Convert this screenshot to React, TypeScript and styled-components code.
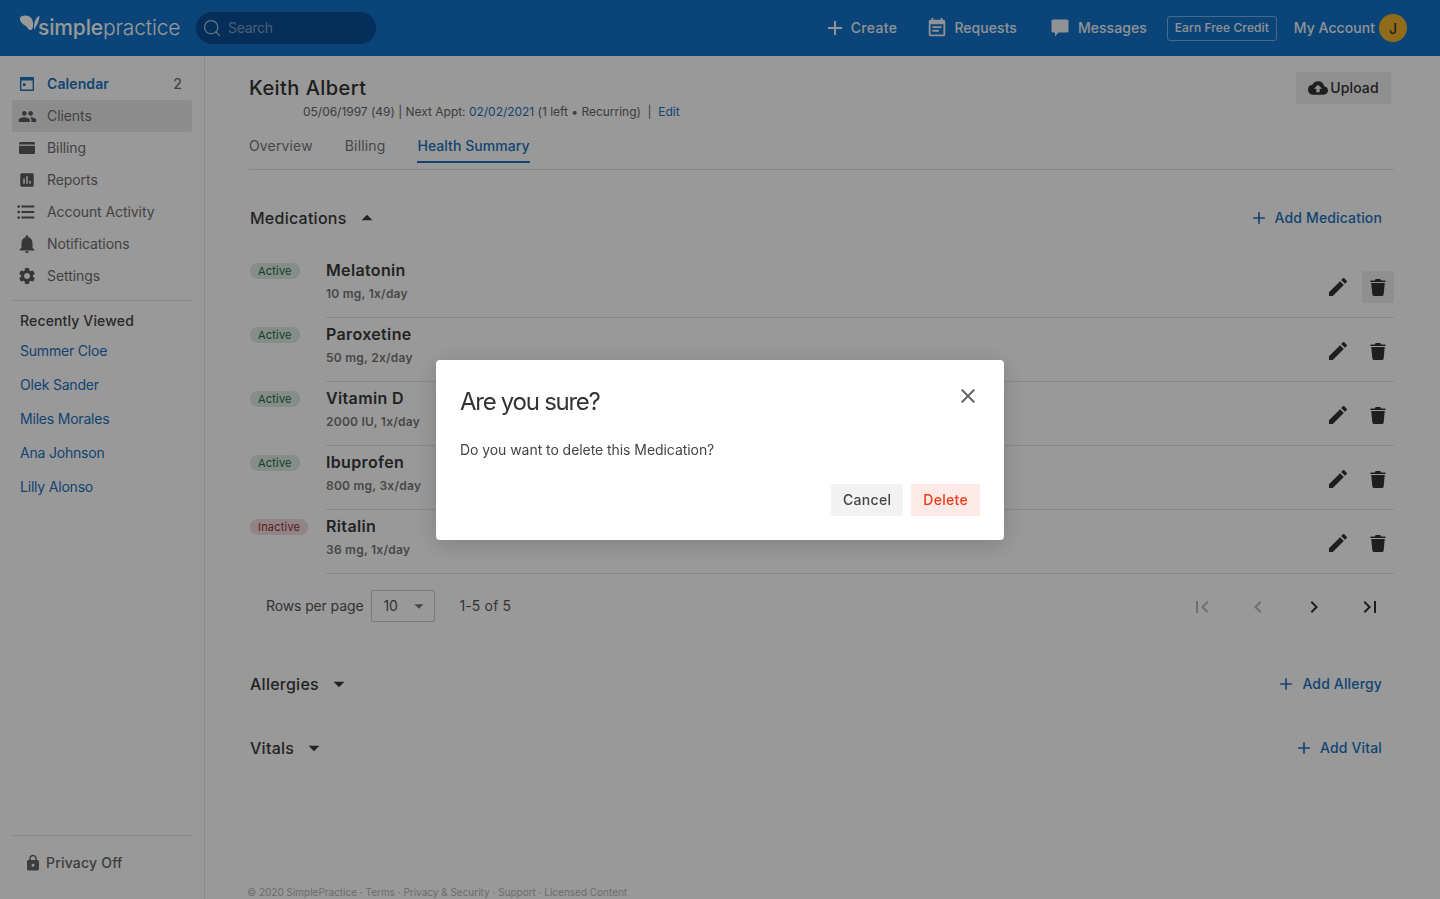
import React from 'react';
import styled, { createGlobalStyle } from 'styled-components';
import { Search } from 'lucide-react';
import {
  MdAdd,
  MdArrowDropDown,
  MdArrowDropUp,
  MdAssessment,
  MdChevronLeft,
  MdChevronRight,
  MdClose,
  MdCloudUpload,
  MdEdit,
  MdEventNote,
  MdFirstPage,
  MdFormatListBulleted,
  MdLastPage,
  MdLock,
  MdNotifications,
  MdPeople,
  MdSettings,
} from 'react-icons/md';

const BLUE = '#2072bd';

const GlobalStyle = createGlobalStyle`
  html, body {
    margin: 0;
    padding: 0;
    height: 100%;
    background: #fff;
  }
  body {
    font-family: Inter, 'Noto Sans', sans-serif;
    color: #333;
    overflow: hidden;
  }
  * {
    box-sizing: border-box;
  }
`;

const Page = styled.div`
  width: 1440px;
  height: 899px;
  display: flex;
  flex-direction: column;
  overflow: hidden;
`;

const TopBar = styled.header`
  height: 56px;
  flex: none;
  background: #1172c9;
  display: flex;
  align-items: center;
  padding: 0 33px 0 20px;
  color: #fff;
`;

const LogoWrap = styled.div`
  display: flex;
  align-items: flex-start;
  width: 176px;
  height: 32px;
  padding-top: 3px;
`;

const LogoText = styled.span`
  font-size: 21px;
  line-height: 26px;
  letter-spacing: -0.15px;
  margin-left: -2px;
  font-weight: 300;
  color: #fff;

  b {
    font-weight: 500;
  }
`;

const SearchBox = styled.div`
  width: 180px;
  height: 32px;
  border-radius: 16px;
  background: #094f96;
  display: flex;
  align-items: center;
  gap: 6px;
  padding: 0 0 1px 6px;
  font-size: 14px;
  letter-spacing: -0.3px;
  color: #7d9fc2;

  svg {
    color: #a9c3dc;
  }
`;

const TopNav = styled.nav`
  margin-left: auto;
  display: flex;
  align-items: center;
  font-size: 14px;
  font-weight: 500;
  letter-spacing: 0.05px;
  color: #f0f4f8;
`;

const TopLink = styled.div<{ $gap: number; $after: number; $wide?: boolean }>`
  display: flex;
  align-items: center;
  gap: ${(p) => p.$gap}px;
  margin-right: ${(p) => p.$after}px;
  padding-bottom: 2px;
  letter-spacing: ${(p) => (p.$wide ? '0.35px' : 'inherit')};

  svg {
    margin-top: 2px;
  }
`;

const CreditButton = styled.div`
  width: 110px;
  height: 25px;
  border: 1px solid #7fb1e0;
  border-radius: 3px;
  display: flex;
  align-items: center;
  justify-content: center;
  padding-bottom: 1px;
  font-size: 12px;
  letter-spacing: 0.1px;
  margin-right: 17px;
`;

const Avatar = styled.div`
  width: 28px;
  height: 28px;
  margin-top: 2px;
  margin-left: 4px;
  border-radius: 50%;
  background: #f0b42c;
  color: #333;
  display: flex;
  align-items: center;
  justify-content: center;
  font-size: 14px;
`;

const Body = styled.div`
  flex: 1;
  display: flex;
  min-height: 0;
`;

const Sidebar = styled.aside`
  width: 205px;
  flex: none;
  border-right: 1px solid #e3e3e3;
  padding: 12px 12px 0;
  display: flex;
  flex-direction: column;
`;

const NavItem = styled.div<{ $active?: boolean; $selected?: boolean }>`
  height: 32px;
  border-radius: 2px;
  display: flex;
  align-items: center;
  padding: 0 10px 2px 5px;
  font-size: 14px;
  letter-spacing: ${(p) => (p.$selected ? '0.1px' : '-0.08px')};
  font-weight: ${(p) => (p.$selected ? 600 : 400)};
  color: ${(p) => (p.$selected ? BLUE : '#6f6f6f')};
  background: ${(p) => (p.$active ? '#e9e9e9' : 'transparent')};
`;

const NavIcon = styled.span`
  width: 30px;
  flex: none;
  margin-top: 2px;
  display: flex;
  align-items: center;
  color: #5c5c5c;
`;

const NavCount = styled.span`
  margin-left: auto;
  font-weight: 500;
  color: #6f6f6f;
`;

const SideDivider = styled.div`
  height: 1px;
  background: #e3e3e3;
  margin-top: 8px;
`;

const RecentTitle = styled.div`
  font-size: 14px;
  font-weight: 500;
  letter-spacing: 0.15px;
  color: #444;
  padding-left: 8px;
  margin-top: 11px;
  margin-bottom: 4px;
  line-height: 17px;
`;

const RecentLink = styled.div`
  height: 34px;
  display: flex;
  align-items: center;
  padding-left: 8px;
  font-size: 14px;
  letter-spacing: -0.2px;
  color: ${BLUE};
`;

const SideFoot = styled.div`
  margin-top: auto;
  height: 64px;
  border-top: 1px solid #e3e3e3;
  display: flex;
  align-items: center;
  gap: 4px;
  padding: 0 0 10px 12px;
  font-size: 14px;
  font-weight: 500;
  letter-spacing: 0.2px;
  color: #666;
`;

const Main = styled.main`
  flex: 1;
  min-width: 0;
  display: flex;
  flex-direction: column;
  padding: 16px 46px 0 44px;
`;

const PatientHead = styled.div`
  display: flex;
  justify-content: space-between;
  align-items: flex-start;
`;

const PatientName = styled.h1`
  margin: 4px 0 0;
  font-size: 20px;
  line-height: 24px;
  font-weight: 500;
  letter-spacing: 0.45px;
  color: #333;
`;

const PatientMeta = styled.div`
  margin: 4px 0 0 54px;
  font-size: 12px;
  line-height: 16px;
  letter-spacing: -0.02px;
  color: #666;

  a {
    color: ${BLUE};
    text-decoration: none;
  }
`;

const UploadButton = styled.button`
  width: 95px;
  height: 32px;
  margin-right: 3px;
  padding: 0 0 2px;
  border: 0;
  border-radius: 2px;
  background: #eeeeee;
  display: flex;
  align-items: center;
  justify-content: center;
  gap: 2px;
  font: 500 14px Inter, sans-serif;
  letter-spacing: 0.1px;
  color: #333;

  svg {
    margin-top: 2px;
  }
`;

const Tabs = styled.div`
  display: flex;
  gap: 32px;
  height: 40px;
  margin-top: 10px;
  border-bottom: 1px solid #e3e3e3;
`;

const Tab = styled.div<{ $current?: boolean }>`
  height: 33px;
  display: flex;
  align-items: center;
  padding: 1px 0 2px;
  font-size: 14px;
  letter-spacing: ${(p) => (p.$current ? '0.05px' : '0.15px')};
  font-weight: ${(p) => (p.$current ? 500 : 400)};
  color: ${(p) => (p.$current ? BLUE : '#777')};
  border-bottom: 2px solid ${(p) => (p.$current ? BLUE : 'transparent')};
`;

const SectionHead = styled.div<{ $top: number }>`
  display: flex;
  align-items: center;
  justify-content: space-between;
  height: 32px;
  margin-top: ${(p) => p.$top}px;
  padding: 0 12px 0 1px;
`;

const SectionTitle = styled.div`
  display: flex;
  align-items: center;
  gap: 7px;
  font-size: 16px;
  font-weight: 500;
  letter-spacing: 0.25px;
  color: #3a3a3a;
`;

const AddLink = styled.div`
  display: flex;
  align-items: center;
  gap: 6px;
  padding-bottom: 2px;
  font-size: 14px;
  font-weight: 500;
  letter-spacing: 0.15px;
  color: ${BLUE};

  svg {
    margin-top: 2px;
  }
`;

const Rows = styled.div`
  margin-top: 20px;
`;

const Row = styled.div`
  height: 64px;
  display: flex;
  padding-left: 1px;
`;

const BadgeCell = styled.div`
  width: 76px;
  flex: none;
  padding-top: 9px;
  display: flex;
  align-items: flex-start;
`;

const Badge = styled.span<{ $off?: boolean }>`
  display: inline-flex;
  align-items: center;
  height: 16px;
  padding: 0 8px;
  border-radius: 8px;
  font-size: 11px;
  letter-spacing: 0.2px;
  color: ${(p) => (p.$off ? '#9c2f2f' : '#1a6b45')};
  background: ${(p) => (p.$off ? '#f0dcdc' : '#dcebe3')};
`;

const RowBody = styled.div`
  flex: 1;
  height: 64px;
  display: flex;
  justify-content: space-between;
  border-bottom: 1px solid #e3e3e3;
`;

const MedInfo = styled.div`
  padding-top: 7px;
`;

const MedName = styled.div`
  font-size: 16px;
  line-height: 19px;
  font-weight: 600;
  letter-spacing: 0.35px;
  color: #3a3a3a;
`;

const MedDose = styled.div`
  margin-top: 6px;
  font-size: 12px;
  line-height: 16px;
  font-weight: 600;
  letter-spacing: 0.25px;
  color: #777;
`;

const RowActions = styled.div`
  display: flex;
  gap: 8px;
  padding-top: 17px;
`;

const IconButton = styled.div<{ $hover?: boolean }>`
  width: 32px;
  height: 32px;
  border-radius: 2px;
  display: flex;
  align-items: center;
  justify-content: center;
  color: #333;
  background: ${(p) => (p.$hover ? '#eeeeee' : 'transparent')};
`;

const Pager = styled.div`
  display: flex;
  align-items: center;
  height: 32px;
  margin-top: 16px;
  padding: 0 0 1px 17px;
  font-size: 14px;
  letter-spacing: -0.12px;
  color: #555;
`;

const RowsSelect = styled.div`
  width: 64px;
  height: 32px;
  margin: 1px 24px 0 8px;
  border: 1px solid #cccccc;
  border-radius: 2px;
  display: flex;
  align-items: center;
  justify-content: space-between;
  padding: 0 4px 1px 11px;
  color: #555;
`;

const PageCount = styled.span`
  letter-spacing: 0.15px;
`;

const PagerButtons = styled.div`
  margin: 2px 12px 0 auto;
  display: flex;
  gap: 32px;
`;

const PagerIcon = styled.div<{ $muted?: boolean }>`
  width: 24px;
  height: 24px;
  display: flex;
  color: ${(p) => (p.$muted ? '#b9b9b9' : '#333')};
`;

const Footer = styled.div`
  margin-top: auto;
  margin-left: -2px;
  height: 13px;
  font-size: 10px;
  line-height: 13px;
  letter-spacing: -0.01px;
  color: #b5b5b5;
  white-space: nowrap;
`;

const Overlay = styled.div`
  position: fixed;
  inset: 0;
  background: rgba(0, 0, 0, 0.4);
  display: flex;
  align-items: center;
  justify-content: center;
`;

const Modal = styled.div`
  position: relative;
  width: 568px;
  height: 180px;
  background: #fff;
  border-radius: 4px;
  box-shadow: 0 4px 24px rgba(0, 0, 0, 0.18);
  padding: 24px;
  display: flex;
  flex-direction: column;
`;

const ModalTitle = styled.h2`
  margin: 1px 0 0;
  font-size: 24px;
  line-height: 34px;
  font-weight: 400;
  letter-spacing: -1.27px;
  color: #333;
`;

const ModalClose = styled.div`
  position: absolute;
  top: 24px;
  right: 24px;
  display: flex;
  color: #666;
`;

const ModalText = styled.p`
  margin: 21px 0 0;
  font-size: 14px;
  line-height: 20px;
  letter-spacing: -0.06px;
  color: #444;
`;

const ModalActions = styled.div`
  margin-top: auto;
  display: flex;
  justify-content: flex-end;
  gap: 8px;
`;

const ModalButton = styled.button<{ $danger?: boolean }>`
  height: 32px;
  padding: 0 12px;
  border: 0;
  border-radius: 2px;
  font: 500 14px Inter, sans-serif;
  letter-spacing: 0.3px;
  color: ${(p) => (p.$danger ? '#f0391b' : '#444')};
  background: ${(p) => (p.$danger ? '#fdeae6' : '#f2f2f2')};
`;

const Butterfly = () => (
  <svg width="20" height="16" viewBox="0 0 20 16" fill="#fff">
    <path d="M0 2.5C2 0 9 -0.5 11.5 3.5C13.5 6.5 13.5 11 12.5 13.5C11.5 15.8 9 15.5 8 13.5C7 11.5 5.5 10.8 3.5 9.5C1 8 -0.5 5 0 2.5Z" />
    <path d="M19.5 0.8C19.5 4 18 8.5 16 11.5C15.3 12.8 14.8 14 14.3 15C13.8 11 14 7.5 15.5 5C16.5 3 18 1.5 19.5 0.8Z" />
  </svg>
);

const CalendarIcon = () => (
  <svg width="14" height="14" viewBox="0 0 14 14" fill={BLUE} style={{ marginLeft: 3 }}>
    <path
      fillRule="evenodd"
      d="M1 0h12a1 1 0 0 1 1 1v12a1 1 0 0 1-1 1H1a1 1 0 0 1-1-1V1a1 1 0 0 1 1-1Zm.4 3.6v9h11.2v-9H1.4Z"
    />
    <rect x="3" y="6.4" width="2.6" height="2.6" />
  </svg>
);

const CardIcon = () => (
  <svg width="16" height="12" viewBox="0 0 16 12" fill="#5c5c5c" style={{ marginLeft: 2 }}>
    <path
      fillRule="evenodd"
      d="M1.5 0h13A1.5 1.5 0 0 1 16 1.5v9a1.5 1.5 0 0 1-1.5 1.5h-13A1.5 1.5 0 0 1 0 10.5v-9A1.5 1.5 0 0 1 1.5 0ZM0 2.6v1.2h16V2.6H0Z"
    />
  </svg>
);

const BubbleIcon = () => (
  <svg width="18" height="18" viewBox="0 0 18 18" fill="currentColor">
    <path d="M2 0.5h14A1.5 1.5 0 0 1 17.5 2v10a1.5 1.5 0 0 1-1.5 1.5H7.5L4 17.5v-4H2A1.5 1.5 0 0 1 .5 12V2A1.5 1.5 0 0 1 2 .5Z" />
  </svg>
);

const TrashIcon = () => (
  <svg width="16" height="18" viewBox="0 0 16 18" fill="currentColor">
    <path d="M1 2.4H5L5.6 1H10.4L11 2.4H15C15.4 2.4 15.6 2.7 15.6 3V4H0.4V3C0.4 2.7 0.6 2.4 1 2.4Z" />
    <path d="M1.2 5H14.8L13.6 16.5C13.5 17.4 12.9 18 12 18H4C3.1 18 2.5 17.4 2.4 16.5L1.2 5Z" />
  </svg>
);

const navItems = [
  { label: 'Clients', icon: <MdPeople size={19} style={{ marginLeft: 1 }} />, active: true },
  { label: 'Billing', icon: <CardIcon /> },
  { label: 'Reports', icon: <MdAssessment size={18} style={{ marginLeft: 1 }} /> },
  { label: 'Account Activity', icon: <MdFormatListBulleted size={22} style={{ marginLeft: -2 }} /> },
  { label: 'Notifications', icon: <MdNotifications size={22} style={{ marginLeft: -1 }} /> },
  { label: 'Settings', icon: <MdSettings size={20} /> },
];

const recent = ['Summer Cloe', 'Olek Sander', 'Miles Morales', 'Ana Johnson', 'Lilly Alonso'];

const medications = [
  { name: 'Melatonin', dose: '10 mg, 1x/day', active: true },
  { name: 'Paroxetine', dose: '50 mg, 2x/day', active: true },
  { name: 'Vitamin D', dose: '2000 IU, 1x/day', active: true },
  { name: 'Ibuprofen', dose: '800 mg, 3x/day', active: true },
  { name: 'Ritalin', dose: '36 mg, 1x/day', active: false },
];

export default function App() {
  return (
    <Page>
      <GlobalStyle />
      <TopBar>
        <LogoWrap>
          <Butterfly />
          <LogoText>
            <b>simple</b>practice
          </LogoText>
        </LogoWrap>
        <SearchBox>
          <Search size={20} strokeWidth={1.5} />
          Search
        </SearchBox>
        <TopNav>
          <TopLink $gap={4} $after={29} $wide>
            <MdAdd size={24} />
            Create
          </TopLink>
          <TopLink $gap={6} $after={34}>
            <MdEventNote size={22} />
            Requests
          </TopLink>
          <TopLink $gap={9} $after={20}>
            <BubbleIcon />
            Messages
          </TopLink>
          <CreditButton>Earn Free Credit</CreditButton>
          <TopLink $gap={0} $after={0}>
            My Account
            <Avatar>J</Avatar>
          </TopLink>
        </TopNav>
      </TopBar>
      <Body>
        <Sidebar>
          <NavItem $selected>
            <NavIcon>
              <CalendarIcon />
            </NavIcon>
            Calendar
            <NavCount>2</NavCount>
          </NavItem>
          {navItems.map((item) => (
            <NavItem key={item.label} $active={item.active}>
              <NavIcon>{item.icon}</NavIcon>
              {item.label}
            </NavItem>
          ))}
          <SideDivider />
          <RecentTitle>Recently Viewed</RecentTitle>
          {recent.map((name) => (
            <RecentLink key={name}>{name}</RecentLink>
          ))}
          <SideFoot>
            <MdLock size={18} />
            Privacy Off
          </SideFoot>
        </Sidebar>
        <Main>
          <PatientHead>
            <div>
              <PatientName>Keith Albert</PatientName>
              <PatientMeta>
                05/06/1997 (49) | Next Appt: <a>02/02/2021</a> (1 left • Recurring) &nbsp;|&nbsp; <a>Edit</a>
              </PatientMeta>
            </div>
            <UploadButton>
              <MdCloudUpload size={20} />
              Upload
            </UploadButton>
          </PatientHead>
          <Tabs>
            <Tab>Overview</Tab>
            <Tab>Billing</Tab>
            <Tab $current>Health Summary</Tab>
          </Tabs>
          <SectionHead $top={32}>
            <SectionTitle>
              Medications
              <MdArrowDropUp size={26} />
            </SectionTitle>
            <AddLink>
              <MdAdd size={20} />
              Add Medication
            </AddLink>
          </SectionHead>
          <Rows>
            {medications.map((med, i) => (
              <Row key={med.name}>
                <BadgeCell>
                  <Badge $off={!med.active}>{med.active ? 'Active' : 'Inactive'}</Badge>
                </BadgeCell>
                <RowBody>
                  <MedInfo>
                    <MedName>{med.name}</MedName>
                    <MedDose>{med.dose}</MedDose>
                  </MedInfo>
                  <RowActions>
                    <IconButton>
                      <MdEdit size={24} />
                    </IconButton>
                    <IconButton $hover={i === 0}>
                      <TrashIcon />
                    </IconButton>
                  </RowActions>
                </RowBody>
              </Row>
            ))}
          </Rows>
          <Pager>
            Rows per page
            <RowsSelect>
              10
              <MdArrowDropDown size={22} color="#777" />
            </RowsSelect>
            <PageCount>1-5 of 5</PageCount>
            <PagerButtons>
              <PagerIcon $muted>
                <MdFirstPage size={24} />
              </PagerIcon>
              <PagerIcon $muted>
                <MdChevronLeft size={24} />
              </PagerIcon>
              <PagerIcon>
                <MdChevronRight size={24} />
              </PagerIcon>
              <PagerIcon>
                <MdLastPage size={24} />
              </PagerIcon>
            </PagerButtons>
          </Pager>
          <SectionHead $top={46}>
            <SectionTitle>
              Allergies
              <MdArrowDropDown size={26} />
            </SectionTitle>
            <AddLink>
              <MdAdd size={20} />
              Add Allergy
            </AddLink>
          </SectionHead>
          <SectionHead $top={32}>
            <SectionTitle>
              Vitals
              <MdArrowDropDown size={26} />
            </SectionTitle>
            <AddLink>
              <MdAdd size={20} />
              Add Vital
            </AddLink>
          </SectionHead>
          <Footer>© 2020 SimplePractice · Terms · Privacy &amp; Security · Support · Licensed Content</Footer>
        </Main>
      </Body>
      <Overlay>
        <Modal>
          <ModalTitle>Are you sure?</ModalTitle>
          <ModalClose>
            <MdClose size={24} />
          </ModalClose>
          <ModalText>Do you want to delete this Medication?</ModalText>
          <ModalActions>
            <ModalButton>Cancel</ModalButton>
            <ModalButton $danger>Delete</ModalButton>
          </ModalActions>
        </Modal>
      </Overlay>
    </Page>
  );
}
